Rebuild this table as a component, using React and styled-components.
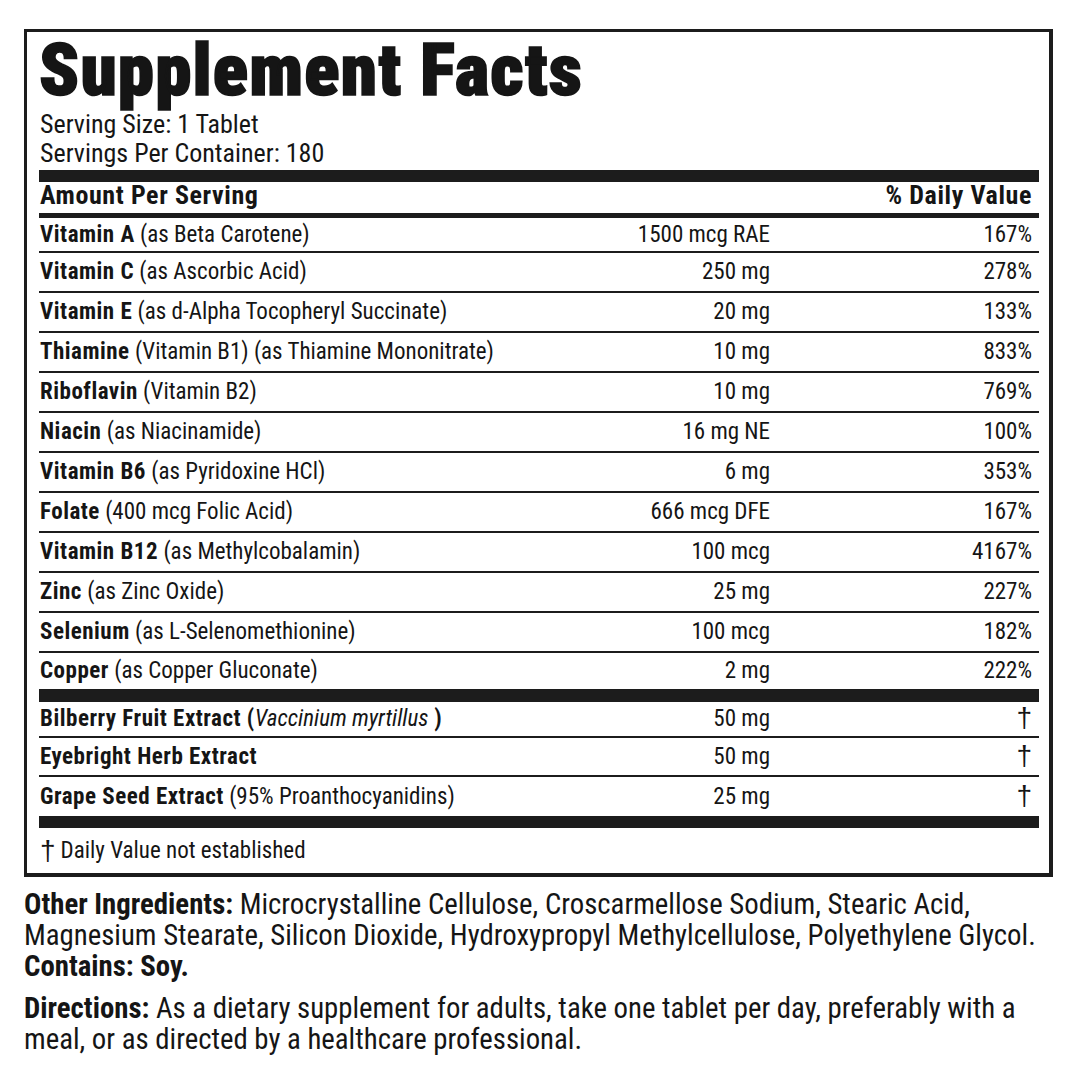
import React from "react";
import styled, { createGlobalStyle } from "styled-components";

const Global = createGlobalStyle`
  html, body { margin: 0; padding: 0; background: #ffffff; }
  * { box-sizing: border-box; }
`;

const Page = styled.main`
  width: 1080px;
  padding: 29px 0 0 24px;
  font-family: "Roboto Condensed", Roboto, "Liberation Sans", sans-serif;
  font-stretch: condensed;
  color: #151515;
`;

const Panel = styled.section`
  width: 1029px;
  border-style: solid;
  border-color: #1c1c1c;
  border-width: 3px 4px 4px 3px;
  padding: 2px 10px 0 12px;
`;

const Title = styled.h1`
  margin: 0;
  font-size: 73px;
  line-height: 73px;
  font-weight: 900;
  letter-spacing: 1.2px;
  -webkit-text-stroke: 1.6px #151515;
`;

const ServingInfo = styled.div`
  padding: 3px 0 2px 1px;
  font-size: 26px;
  line-height: 29px;
`;

const Bar = styled.div`
  height: ${(p) => p.$h}px;
  background: #1c1c1c;
`;

const HeaderRow = styled.div`
  display: flex;
  justify-content: space-between;
  height: 31px;
  padding: 2px 7px 0 1px;
  font-size: 26px;
  line-height: 22px;
  font-weight: 700;
  letter-spacing: 0.6px;
`;

const Row = styled.div`
  display: grid;
  grid-template-columns: 1fr 230px 262px;
  align-items: center;
  box-sizing: content-box;
  height: ${(p) => p.$h}px;
  padding: 0 7px 0 1px;
  border-bottom: ${(p) => (p.$line ? "2px solid #1c1c1c" : "none")};
  font-size: 23px;
  line-height: 24px;
`;

const Name = styled.span`
  white-space: nowrap;
  b { font-weight: 700; letter-spacing: 0.5px; }
  i { font-style: italic; }
`;

const Amount = styled.span`
  text-align: right;
  white-space: nowrap;
`;

const Daily = styled.span`
  text-align: right;
  white-space: nowrap;
`;

const Dagger = styled.span`
  font-family: "Liberation Sans", "DejaVu Sans", sans-serif;
  font-size: 28px;
  line-height: 24px;
  font-weight: 400;
`;

const Footnote = styled.div`
  display: flex;
  align-items: center;
  gap: 5px;
  height: 45px;
  padding-left: 1px;
  font-size: 23px;
`;

const Notes = styled.section`
  padding-top: 12px;
  font-size: 28.8px;
  line-height: 31px;
`;

const Para = styled.p`
  margin: 0 0 ${(p) => p.$gap || 0}px;
  b { font-weight: 700; }
`;

const vitamins = [
  ["Vitamin A", "(as Beta Carotene)", "1500 mcg RAE", "167%"],
  ["Vitamin C", "(as Ascorbic Acid)", "250 mg", "278%"],
  ["Vitamin E", "(as d-Alpha Tocopheryl Succinate)", "20 mg", "133%"],
  ["Thiamine", "(Vitamin B1) (as Thiamine Mononitrate)", "10 mg", "833%"],
  ["Riboflavin", "(Vitamin B2)", "10 mg", "769%"],
  ["Niacin", "(as Niacinamide)", "16 mg NE", "100%"],
  ["Vitamin B6", "(as Pyridoxine HCl)", "6 mg", "353%"],
  ["Folate", "(400 mcg Folic Acid)", "666 mcg DFE", "167%"],
  ["Vitamin B12", "(as Methylcobalamin)", "100 mcg", "4167%"],
  ["Zinc", "(as Zinc Oxide)", "25 mg", "227%"],
  ["Selenium", "(as L-Selenomethionine)", "100 mcg", "182%"],
  ["Copper", "(as Copper Gluconate)", "2 mg", "222%"],
];

export default function App() {
  return (
    <Page>
      <Global />
      <Panel>
        <Title>Supplement Facts</Title>
        <ServingInfo>
          <div>Serving Size: 1 Tablet</div>
          <div>Servings Per Container: 180</div>
        </ServingInfo>
        <Bar $h={12} />
        <HeaderRow>
          <span>Amount Per Serving</span>
          <span>% Daily Value</span>
        </HeaderRow>
        <Bar $h={5} />
        {vitamins.map(([name, detail, amount, dv], i) => {
          const last = i === vitamins.length - 1;
          const h = i === 0 ? 33 : last ? 36 : 38;
          return (
            <Row key={name} $h={h} $line={!last}>
              <Name>
                <b>{name}</b> {detail}
              </Name>
              <Amount>{amount}</Amount>
              <Daily>{dv}</Daily>
            </Row>
          );
        })}
        <Bar $h={13} />
        <Row $h={34} $line>
          <Name>
            <b>Bilberry Fruit Extract (</b>
            <i>Vaccinium myrtillus</i>
            <b> )</b>
          </Name>
          <Amount>50 mg</Amount>
          <Daily>
            <Dagger>†</Dagger>
          </Daily>
        </Row>
        <Row $h={37} $line>
          <Name>
            <b>Eyebright Herb Extract</b>
          </Name>
          <Amount>50 mg</Amount>
          <Daily>
            <Dagger>†</Dagger>
          </Daily>
        </Row>
        <Row $h={39}>
          <Name>
            <b>Grape Seed Extract</b> (95% Proanthocyanidins)
          </Name>
          <Amount>25 mg</Amount>
          <Daily>
            <Dagger>†</Dagger>
          </Daily>
        </Row>
        <Bar $h={12} />
        <Footnote>
          <Dagger>†</Dagger>
          <span>Daily Value not established</span>
        </Footnote>
      </Panel>
      <Notes>
        <Para>
          <b>Other Ingredients:</b> Microcrystalline Cellulose, Croscarmellose Sodium, Stearic Acid,
          <br />
          Magnesium Stearate, Silicon Dioxide, Hydroxypropyl Methylcellulose, Polyethylene Glycol.
        </Para>
        <Para $gap={11}>
          <b>Contains: Soy.</b>
        </Para>
        <Para>
          <b>Directions:</b> As a dietary supplement for adults, take one tablet per day, preferably with a
          <br />
          meal, or as directed by a healthcare professional.
        </Para>
      </Notes>
    </Page>
  );
}
